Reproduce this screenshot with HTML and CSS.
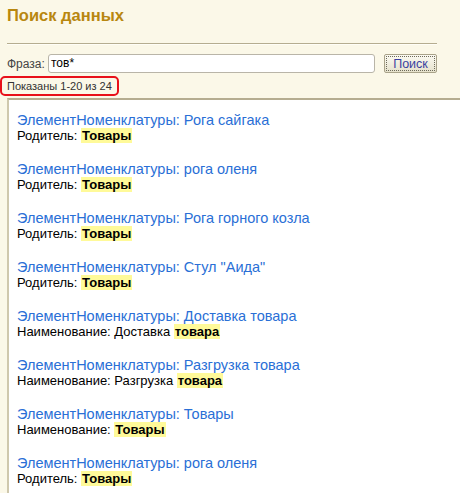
FILE: index.html
```html
<!DOCTYPE html>
<html lang="ru">
<head>
<meta charset="utf-8">
<title>Поиск данных</title>
<link rel="stylesheet" href="styles.css">
</head>
<body>
<div class="page">
  <header class="top">
    <h1 class="title">Поиск данных</h1>
    <div class="sep"></div>
    <div class="search">
      <label class="phrase-label">Фраза:</label>
      <div class="input">тов*</div>
      <button class="btn">Поиск</button>
    </div>
    <div class="status">Показаны 1-20 из 24</div>
  </header>
  <main class="results">
    <div class="item">
      <a class="link">ЭлементНоменклатуры: Рога сайгака</a>
      <div class="meta">Родитель: <b class="hl">Товары</b></div>
    </div>
    <div class="item">
      <a class="link">ЭлементНоменклатуры: рога оленя</a>
      <div class="meta">Родитель: <b class="hl">Товары</b></div>
    </div>
    <div class="item">
      <a class="link">ЭлементНоменклатуры: Рога горного козла</a>
      <div class="meta">Родитель: <b class="hl">Товары</b></div>
    </div>
    <div class="item">
      <a class="link">ЭлементНоменклатуры: Стул "Аида"</a>
      <div class="meta">Родитель: <b class="hl">Товары</b></div>
    </div>
    <div class="item">
      <a class="link">ЭлементНоменклатуры: Доставка товара</a>
      <div class="meta">Наименование: Доставка <b class="hl">товара</b></div>
    </div>
    <div class="item">
      <a class="link">ЭлементНоменклатуры: Разгрузка товара</a>
      <div class="meta">Наименование: Разгрузка <b class="hl">товара</b></div>
    </div>
    <div class="item">
      <a class="link">ЭлементНоменклатуры: Товары</a>
      <div class="meta">Наименование: <b class="hl">Товары</b></div>
    </div>
    <div class="item">
      <a class="link">ЭлементНоменклатуры: рога оленя</a>
      <div class="meta">Родитель: <b class="hl">Товары</b></div>
    </div>
  </main>
</div>
</body>
</html>
```

FILE: styles.css
```css
html, body {
  margin: 0;
  padding: 0;
  background: #fbf8e8;
  font-family: "Liberation Sans", Arial, sans-serif;
  overflow: hidden;
}
.page {
  width: 460px;
  height: 493px;
  display: flex;
  flex-direction: column;
}
.title {
  margin: 0;
  padding: 3px 0 0 7px;
  height: 24px;
  font-size: 16.5px;
  font-weight: bold;
  color: #b8870f;
  line-height: 24px;
}
.sep {
  margin: 16px 23px 0 7px;
  border-top: 1px solid #b5ad90;
  border-bottom: 1px solid #fffef6;
}
.search {
  display: flex;
  align-items: center;
  margin-top: 9px;
  padding-left: 7px;
  height: 19px;
}
.phrase-label {
  font-size: 12px;
  color: #444;
  width: 41px;
}
.input {
  width: 327px;
  box-sizing: border-box;
  height: 19px;
  border: 1px solid #b9b5a8;
  border-radius: 3px;
  background: #fff;
  font-size: 12px;
  line-height: 17px;
  padding-left: 2px;
  color: #000;
}
.btn {
  margin-left: 9px;
  width: 53px;
  height: 19px;
  padding: 0;
  border: 1px solid #a9a38a;
  outline: 1px dotted #6d6a5a;
  outline-offset: -3px;
  border-radius: 2px;
  background: linear-gradient(#fbfaf2, #e6e2cc);
  font-family: "Liberation Sans", Arial, sans-serif;
  font-size: 12.5px;
  color: #3a3fa0;
}
.status {
  margin-top: 3px;
  width: 119px;
  height: 20px;
  box-sizing: border-box;
  border: 2px solid #e8101a;
  border-radius: 5px;
  font-size: 11px;
  line-height: 16px;
  padding-left: 5px;
  color: #333;
  white-space: nowrap;
}
.results {
  margin-top: 2px;
  margin-left: 7px;
  flex: 1;
  background: #fff;
  border-top: 2px solid #b5ad90;
  border-left: 2px solid #cfc8ad;
  padding: 12px 0 0 8px;
}
.item {
  height: 49px;
  line-height: 16px;
}
.link {
  display: block;
  font-size: 14.5px;
  color: #2a6fd6;
  text-decoration: none;
}
.meta {
  font-size: 13px;
  color: #000;
}
.hl {
  background: #fffa99;
  padding: 0 1px;
}
```
